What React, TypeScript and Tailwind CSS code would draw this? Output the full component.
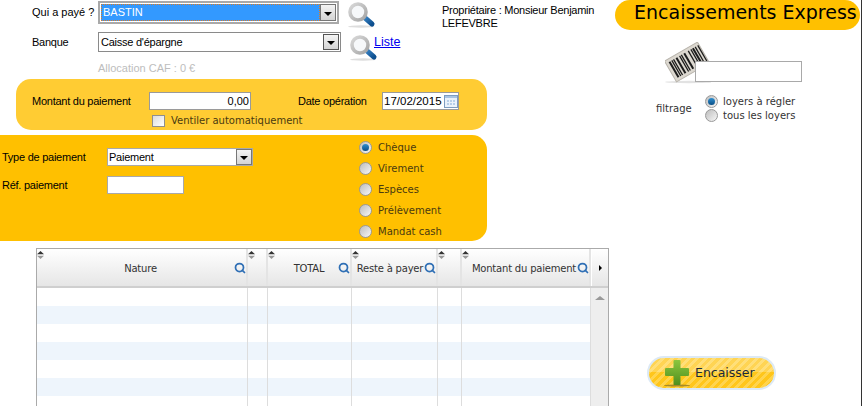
import { Search } from "lucide-react";

const sans = "font-['Liberation_Sans',Arial,sans-serif]";
const verdana = "font-['DejaVu_Sans',Verdana,sans-serif]";

const columns = [
  { label: "Nature", width: "w-[211px]", pad: "pr-[2px]", search: true },
  { label: "", width: "w-[20px]", pad: "", search: false },
  { label: "TOTAL", width: "w-[84px]", pad: "", search: true },
  { label: "Reste à payer", width: "w-[86px]", pad: "pr-[8px]", search: true },
  { label: "", width: "w-[24px]", pad: "", search: false },
  { label: "Montant du paiement", width: "w-[129px]", pad: "pl-[1px] pr-[4px]", search: true },
];

function Magnifier() {
  return (
    <svg width="30" height="26" viewBox="0 0 30 26" className="shrink-0">
      <defs>
        <linearGradient id="handle" x1="0" y1="0" x2="1" y2="1">
          <stop offset="0" stopColor="#3b86c8" />
          <stop offset="1" stopColor="#0d4f8f" />
        </linearGradient>
        <linearGradient id="ring" x1="0" y1="0" x2="1" y2="1">
          <stop offset="0" stopColor="#d8d8d8" />
          <stop offset="1" stopColor="#a5a5a5" />
        </linearGradient>
      </defs>
      <ellipse cx="14" cy="24.5" rx="13" ry="1.2" fill="#dddddd" />
      <line x1="17" y1="15" x2="25" y2="22" stroke="url(#handle)" strokeWidth="5" strokeLinecap="round" />
      <circle cx="11" cy="10" r="8" fill="#f6f8fa" stroke="url(#ring)" strokeWidth="3.6" />
    </svg>
  );
}

function DropArrow({ boxed }: { boxed?: boolean }) {
  return (
    <div className={`flex w-[16px] shrink-0 items-center justify-center border bg-gradient-to-b from-[#f4f4f4] to-[#d4d4d4] ${boxed ? "border-[#555]" : "border-[#777]"}`}>
      <span className="mt-[2px] h-0 w-0 border-x-[4px] border-t-[4px] border-x-transparent border-t-black" />
    </div>
  );
}

function Radio({ checked }: { checked?: boolean }) {
  return (
    <span className="flex h-[13px] w-[13px] shrink-0 items-center justify-center rounded-full border border-[#999] bg-gradient-to-br from-[#bdbdbd] to-[#f7f7f7]">
      {checked && <span className="h-[7px] w-[7px] rounded-full bg-gradient-to-b from-[#2f8fd0] to-[#0a4f86]" />}
    </span>
  );
}

function SortArrows() {
  return (
    <svg width="7" height="8" viewBox="0 0 7 8" className="absolute left-[0px] top-[2px]">
      <path d="M3.5 0 L7 3.2 H0 Z" fill="#333" />
      <path d="M3.5 8 L7 4.8 H0 Z" fill="#999" />
    </svg>
  );
}

function Barcode() {
  const bars = [0, 3, 5, 8, 12, 14, 17, 22, 25, 27, 30, 33];
  return (
    <svg width="46" height="42" viewBox="0 0 46 42" className="shrink-0">
      <ellipse cx="24" cy="40" rx="24" ry="1.2" fill="#e2e2e2" />
      <g transform="rotate(-30 22 20)">
        <rect x="3" y="8" width="38" height="24" fill="#dcd8d0" stroke="#b8b4ac" strokeWidth="1" />
        {bars.map((x, i) => (
          <rect key={x} x={6 + x} y="11" width={i % 3 === 0 ? 2 : 1.3} height="18" fill="#1c1c1c" />
        ))}
      </g>
    </svg>
  );
}

function PlusIcon() {
  return (
    <svg width="28" height="28" viewBox="0 0 28 28" className="shrink-0">
      <defs>
        <linearGradient id="plus" x1="0" y1="0" x2="0" y2="1">
          <stop offset="0" stopColor="#8cc63f" />
          <stop offset="1" stopColor="#4f8f1e" />
        </linearGradient>
      </defs>
      <ellipse cx="14" cy="26.5" rx="13" ry="1" fill="#a68a2a" />
      <path
        d="M10.5 2 Q10.5 1 11.5 1 H16.5 Q17.5 1 17.5 2 V9 H25 Q26 9 26 10 V16 Q26 17 25 17 H17.5 V25 Q17.5 26 16.5 26 H11.5 Q10.5 26 10.5 25 V17 H3 Q2 17 2 16 V10 Q2 9 3 9 H10.5 Z"
        fill="url(#plus)"
      />
    </svg>
  );
}

export default function App() {
  return (
    <div className={`flex h-[406px] w-[863px] overflow-hidden bg-white text-[11px] tracking-[-0.25px] text-black ${sans}`}>
      <div className="w-[610px] shrink-0">
        <div className="mt-px flex h-[23px] items-center pl-[32px]">
          <span className="w-[66px] whitespace-nowrap tracking-normal">Qui a payé ?</span>
          <div className="flex h-[23px] w-[241px] border-2 border-[#a9a9a9] p-px">
            <div className="flex-1 border border-dotted border-[#e07a1f] bg-[#3399ff] pl-[1px] leading-[15px] tracking-normal text-white">BASTIN</div>
            <DropArrow />
          </div>
          <div className="-mb-[5px] ml-[8px]"><Magnifier /></div>
          <div className="ml-[65px] mt-[3px] h-[26px] -mb-[3px] self-start whitespace-nowrap leading-[13px]">
            Propriétaire : Monsieur Benjamin
            <br />
            LEFEVBRE
          </div>
        </div>

        <div className="mt-[8px] flex h-[20px] items-center pl-[32px]">
          <span className="w-[66px]">Banque</span>
          <div className="flex h-[20px] w-[243px] border border-[#8a8a8a] p-px pl-[2px]">
            <div className="flex-1 leading-[16px]">Caisse d'épargne</div>
            <DropArrow boxed />
          </div>
          <div className="-mb-[12px] ml-[8px] w-[25px]"><Magnifier /></div>
          <a href="#" className="text-[12.5px] tracking-normal text-[#0000ee] underline">Liste</a>
        </div>

        <div className="mt-[10px] h-[12px] pl-[98px] leading-[12px] tracking-normal text-[#bdbdbd]">Allocation CAF : 0 €</div>

        <div className="ml-[16px] mt-[5px] h-[51px] w-[471px] rounded-[15px] bg-[#ffcc33] pt-[13px]">
          <div className="flex h-[18px] items-center pl-[16px]">
            <span className="w-[117px]">Montant du paiement</span>
            <div className="h-[18px] w-[102px] border border-[#9a9a9a] bg-white pr-[1px] text-right leading-[16px] tracking-normal">0,00</div>
            <span className="ml-[47px] w-[84px]">Date opération</span>
            <div className="flex h-[18px] w-[77px] items-center justify-between border border-[#9a9a9a] bg-white pl-[1px] text-[11.5px] leading-[16px] tracking-normal">
              17/02/2015
              <svg width="14" height="14" viewBox="0 0 14 14" className="shrink-0">
                <rect x="0.5" y="1.5" width="13" height="12" fill="#eaf2fb" stroke="#7d9cc0" />
                <rect x="1" y="2" width="12" height="2" fill="#a9c4e4" />
                <path d="M3 6h2v2H3zM6 6h2v2H6zM9 6h2v2H9zM3 9h2v2H3zM6 9h2v2H6zM9 9h2v2H9z" fill="#b7cfea" />
              </svg>
            </div>
          </div>
          <div className={`mt-[4px] flex h-[13px] items-center pl-[136px] text-[10px] tracking-normal text-[#4a3a10] ${verdana}`}>
            <span className="h-[12px] w-[13px] border border-[#8f8f8f] bg-gradient-to-br from-[#dcdcdc] to-white" />
            <span className="ml-[6px]">Ventiler automatiquement</span>
          </div>
        </div>

        <div className="mt-[5px] flex h-[106px] w-[487px] rounded-r-[15px] bg-[#ffc000] pt-[2px]">
          <div className="w-[359px] pl-[2px] pt-[11px]">
            <div className="flex h-[18px] items-center">
              <span className="w-[105px]">Type de paiement</span>
              <div className="flex h-[18px] w-[146px] border border-[#a9a9a9] bg-white pl-[1px] leading-[16px]">
                <div className="flex-1">Paiement</div>
                <DropArrow />
              </div>
            </div>
            <div className="mt-[10px] flex h-[18px] items-center">
              <span className="w-[105px]">Réf. paiement</span>
              <div className="h-[18px] w-[77px] border border-[#a9a9a9] bg-white" />
            </div>
          </div>
          <div className={`text-[10px] tracking-normal text-[#4a3a10] ${verdana}`}>
            {["Chèque", "Virement", "Espèces", "Prélèvement", "Mandat cash"].map((label, i) => (
              <div key={label} className="flex h-[21px] items-center gap-[6px]">
                <Radio checked={i === 0} />
                <span>{label}</span>
              </div>
            ))}
          </div>
        </div>

        <div className={`ml-[36px] mt-[7px] h-[200px] w-[573px] border border-[#aaaaaa] text-[10px] text-[#333] ${verdana}`}>
          <div className="flex h-[39px] border-b-2 border-[#cfcfcf]">
            {columns.map((col, i) => (
              <div
                key={i}
                className={`relative flex items-center justify-center border-r-2 border-[#e4e4e4] bg-gradient-to-b from-white to-[#e6e6e6] pt-[2px] ${col.width} ${col.pad}`}
              >
                <SortArrows />
                <span className="whitespace-nowrap tracking-[-0.2px]">{col.label}</span>
                {col.search && (
                  <Search size={12} strokeWidth={3.5} className="absolute right-[0px] top-[13px] text-[#2f6fb5]" />
                )}
              </div>
            ))}
            <div className="flex flex-1 items-center justify-center border-l border-white bg-gradient-to-b from-white to-[#e6e6e6]">
              <span className="h-0 w-0 border-y-[3px] border-l-[3px] border-y-transparent border-l-black" />
            </div>
          </div>
          <div className="flex">
            <div>
              {[0, 1, 2, 3, 4, 5, 6].map((row) => (
                <div key={row} className={`flex h-[18px] ${row % 2 ? "bg-[#eef5fc]" : "bg-white"}`}>
                  {columns.map((col, i) => (
                    <div key={i} className={`border-r border-[#dddddd] ${col.width}`} />
                  ))}
                </div>
              ))}
            </div>
            <div className="flex h-[126px] flex-1 justify-center bg-[#eeeeee] pt-[8px]">
              <span className="h-0 w-0 border-x-[5px] border-b-[4px] border-x-transparent border-b-[#999]" />
            </div>
          </div>
        </div>
      </div>

      <div className="w-[252px] shrink-0 border-r border-[#333]">
        <div className={`ml-[5px] flex h-[30px] w-[245px] items-center rounded-[15px] bg-[#ffc000] pb-[5px] pl-[19px] text-[19px] tracking-normal whitespace-nowrap ${verdana}`}>
          Encaissements Express
        </div>
        <div className="ml-[55px] mt-[12px] flex h-[42px]">
          <Barcode />
          <div className="-ml-[16px] mt-[19px] h-[21px] w-[107px] border border-[#a9a9a9] bg-white" />
        </div>
        <div className={`mt-[10px] flex items-center pl-[46px] text-[10px] tracking-normal text-[#333] ${verdana}`}>
          <span className="w-[49px]">filtrage</span>
          <div>
            <div className="flex h-[14px] items-center gap-[5px]"><Radio checked /><span>loyers à régler</span></div>
            <div className="flex h-[14px] items-center gap-[5px]"><Radio /><span>tous les loyers</span></div>
          </div>
        </div>
        <div className={`ml-[37px] mt-[234px] flex h-[34px] w-[129px] items-center rounded-full border-2 border-[#dce9f5] bg-[linear-gradient(to_bottom,rgba(255,255,255,0.25)_0%,rgba(255,255,255,0.25)_45%,transparent_45%),repeating-linear-gradient(135deg,#ffc61a_0px,#ffc61a_3px,#ffd44d_3px,#ffd44d_6px)] pl-[14px] text-[12.5px] tracking-normal text-[#1c2a38] ${verdana}`}>
          <PlusIcon />
          <span className="ml-[4px]">Encaisser</span>
        </div>
      </div>
    </div>
  );
}
